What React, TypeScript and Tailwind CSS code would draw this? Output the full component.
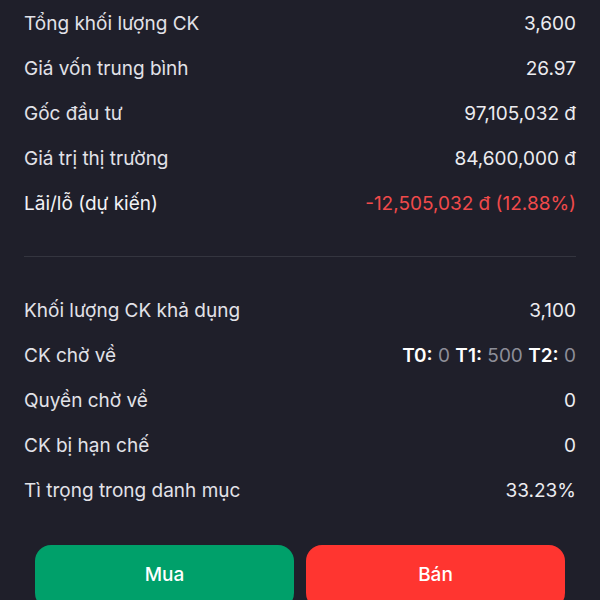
import React from "react";

type Row = { label: string; value: React.ReactNode; strong?: boolean };

const top: Row[] = [
  { label: "Tổng khối lượng CK", value: "3,600" },
  { label: "Giá vốn trung bình", value: "26.97" },
  { label: "Gốc đầu tư", value: "97,105,032 đ" },
  { label: "Giá trị thị trường", value: "84,600,000 đ" },
  {
    label: "Lãi/lỗ (dự kiến)",
    value: <span className="text-[#f04a4a]">-12,505,032 đ (12.88%)</span>,
    strong: true,
  },
];

const bottom: Row[] = [
  { label: "Khối lượng CK khả dụng", value: "3,100" },
  {
    label: "CK chờ về",
    value: (
      <span>
        <span className="font-semibold text-white">T0:</span>{" "}
        <span className="text-[#8d8e98]">0</span>{" "}
        <span className="font-semibold text-white">T1:</span>{" "}
        <span className="text-[#8d8e98]">500</span>{" "}
        <span className="font-semibold text-white">T2:</span>{" "}
        <span className="text-[#8d8e98]">0</span>
      </span>
    ),
  },
  { label: "Quyền chờ về", value: "0" },
  { label: "CK bị hạn chế", value: "0" },
  { label: "Tì trọng trong danh mục", value: "33.23%" },
];

function InfoRow({ row }: { row: Row }) {
  return (
    <div className="flex h-[45px] items-center justify-between">
      <span className={row.strong ? "text-[#f2f2f5]" : "text-[#e2e2e8]"}>{row.label}</span>
      <span className="text-[#ececf0]">{row.value}</span>
    </div>
  );
}

export default function App() {
  return (
    <div
      className="h-[600px] w-[600px] overflow-hidden bg-[#1f1f2a] pt-[2px] text-[19px]"
      style={{ fontFamily: "Inter, 'Noto Sans', sans-serif" }}
    >
      <div className="px-6">
        {top.map((r) => (
          <InfoRow key={r.label} row={r} />
        ))}
        <div className="mt-[29px] mb-[32px] h-px bg-[#34353f]" />
        {bottom.map((r) => (
          <InfoRow key={r.label} row={r} />
        ))}
      </div>
      <div className="mt-[31px] flex gap-3 px-[35px]">
        <button className="h-[64px] flex-1 rounded-2xl bg-[#00a06a] pb-1 text-[19px] font-medium text-white">
          Mua
        </button>
        <button className="h-[64px] flex-1 rounded-2xl bg-[#ff3530] pb-1 text-[19px] font-medium text-white">
          Bán
        </button>
      </div>
    </div>
  );
}
